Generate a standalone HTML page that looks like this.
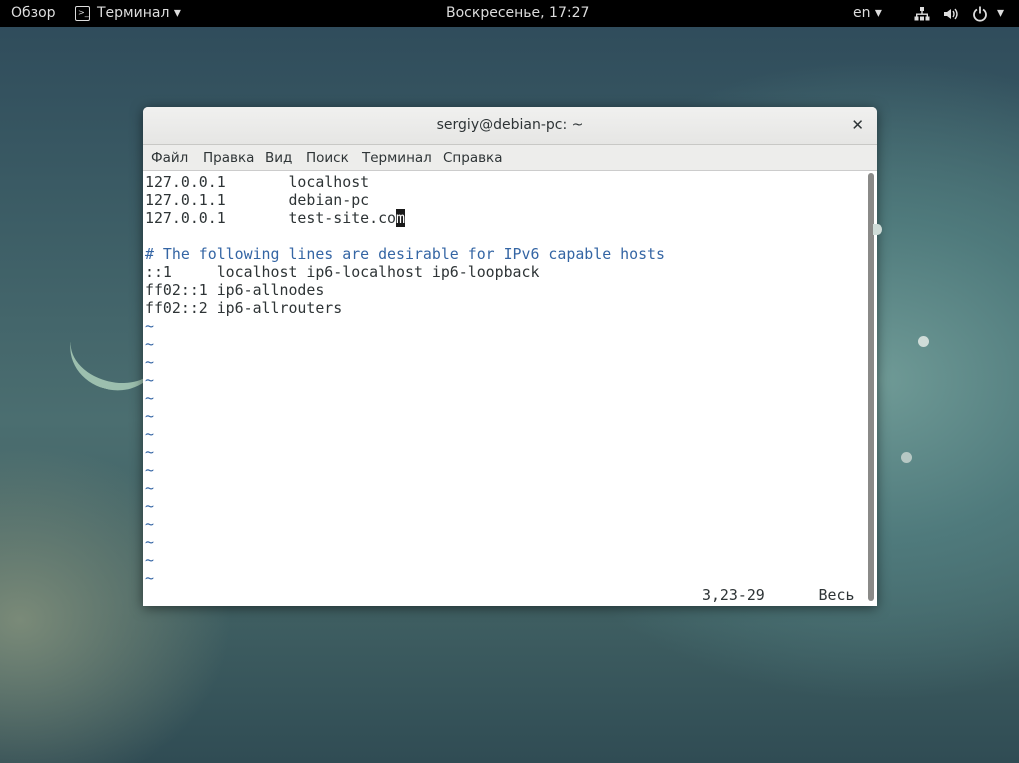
<!DOCTYPE html>
<html><head><meta charset="utf-8"><style>
*{margin:0;padding:0;box-sizing:border-box}
body{width:1019px;height:763px;overflow:hidden;position:relative;font-family:"DejaVu Sans","Liberation Sans",sans-serif;
background:radial-gradient(ellipse 500px 400px at 880px 380px,#6f9a96 0%,#4f7a7c 40%,transparent 80%),
radial-gradient(ellipse 300px 250px at 20px 620px,#7a8a78 0%,transparent 70%),
linear-gradient(180deg,#2e4a5a 0%,#3d5e66 30%,#4b6e70 55%,#3f5f62 80%,#304c54 100%);}
.top{position:absolute;left:0;top:0;width:1019px;height:27px;background:#000;color:#ddd;font-size:14px}
.top span{position:absolute;top:5px}
.win{position:absolute;left:143px;top:107px;width:734px;height:499px;background:#fff;border-radius:5px 5px 0 0;box-shadow:0 2px 12px rgba(0,0,0,.5)}
.title{height:38px;background:linear-gradient(#f0f0ef,#e6e6e4);border-radius:5px 5px 0 0;border-bottom:1px solid #c8c8c5;text-align:center;font-size:14px;color:#2e3436;line-height:37px;position:relative}
.menu{height:26px;background:#ededeb;border-bottom:1px solid #ccc;font-size:13.5px;color:#2e3436;line-height:27px;position:relative}
.menu span{position:absolute;top:0}
pre{position:absolute;left:2px;top:66px;font-family:"DejaVu Sans Mono","Liberation Mono",monospace;font-size:14.9px;line-height:18px;color:#2e3436}
.c{color:#3465a4}.t{color:#3465a4}
.cur{background:#1a1a1a;color:#fff}
.sb{position:absolute;right:3px;top:66px;width:6px;height:428px;background:#8a8a88;border-radius:3px}
</style></head><body>
<div class="top">
<span style="left:11px">Обзор</span>
<span style="left:75px;top:6px;width:15px;height:15px;border:1.5px solid #ddd;border-radius:2px;font-size:8px;line-height:11px;padding-left:2px">&gt;_</span>
<span style="left:97px">Терминал ▾</span>
<span style="left:446px">Воскресенье, 17:27</span>
<span style="left:853px">en ▾</span>
<svg style="position:absolute;left:914px;top:6px" width="16" height="16" viewBox="0 0 16 16" fill="#ddd"><rect x="6" y="1" width="4" height="4"/><rect x="7.3" y="5" width="1.4" height="3"/><rect x="2" y="7.5" width="12" height="1.4"/><rect x="2" y="7.5" width="1.4" height="3"/><rect x="12.6" y="7.5" width="1.4" height="3"/><rect x="0.5" y="10.5" width="4" height="4"/><rect x="11.5" y="10.5" width="4" height="4"/><rect x="6" y="10.5" width="4" height="4"/></svg>
<svg style="position:absolute;left:943px;top:6px" width="16" height="16" viewBox="0 0 16 16" fill="#ddd"><path d="M1 6h3l4-3v10l-4-3H1z"/><path d="M10 5q2 3 0 6M12 3q4 5 0 10" stroke="#ddd" stroke-width="1.4" fill="none"/></svg>
<svg style="position:absolute;left:972px;top:5px" width="16" height="17" viewBox="0 0 16 17"><path d="M5 4.5a6 6 0 1 0 6 0" stroke="#ddd" stroke-width="1.8" fill="none"/><path d="M8 1.5v7" stroke="#ddd" stroke-width="1.8"/></svg>
<span style="left:997px">▾</span>
</div>
<div style="position:absolute;left:70px;top:310px;width:90px;height:80px;border-radius:50%;border-bottom:8px solid #9cbfae;transform:rotate(15deg);clip-path:inset(55% 0 0 0)"></div>
<div class="win">
<div class="title">sergiy@debian-pc: ~<span style="position:absolute;right:13px;top:0;font-size:15px;font-weight:bold">✕</span></div>
<div class="menu"><span style="left:8px">Файл</span><span style="left:60px">Правка</span><span style="left:122px">Вид</span><span style="left:163px">Поиск</span><span style="left:219px">Терминал</span><span style="left:300px">Справка</span></div>
<pre>127.0.0.1       localhost
127.0.1.1       debian-pc
127.0.0.1       test-site.co<span class="cur">m</span>

<span class="c"># The following lines are desirable for IPv6 capable hosts</span>
::1     localhost ip6-localhost ip6-loopback
ff02::1 ip6-allnodes
ff02::2 ip6-allrouters
<span class="t">~
~
~
~
~
~
~
~
~
~
~
~
~
~
~</span>
</pre>
<div style="position:absolute;left:559px;top:479px;font-family:'DejaVu Sans Mono',monospace;font-size:14.9px;color:#2e3436;white-space:pre">3,23-29      Весь</div>
<div class="sb"></div>
</div>
<div style="position:absolute;left:918px;top:336px;width:11px;height:11px;border-radius:50%;background:#cfdcd8"></div>
<div style="position:absolute;left:901px;top:452px;width:11px;height:11px;border-radius:50%;background:#b7c8c4"></div>
<div style="position:absolute;left:873px;top:224px;width:9px;height:11px;border-radius:0 50% 50% 0;background:#cfdcd8"></div>
</body></html>
